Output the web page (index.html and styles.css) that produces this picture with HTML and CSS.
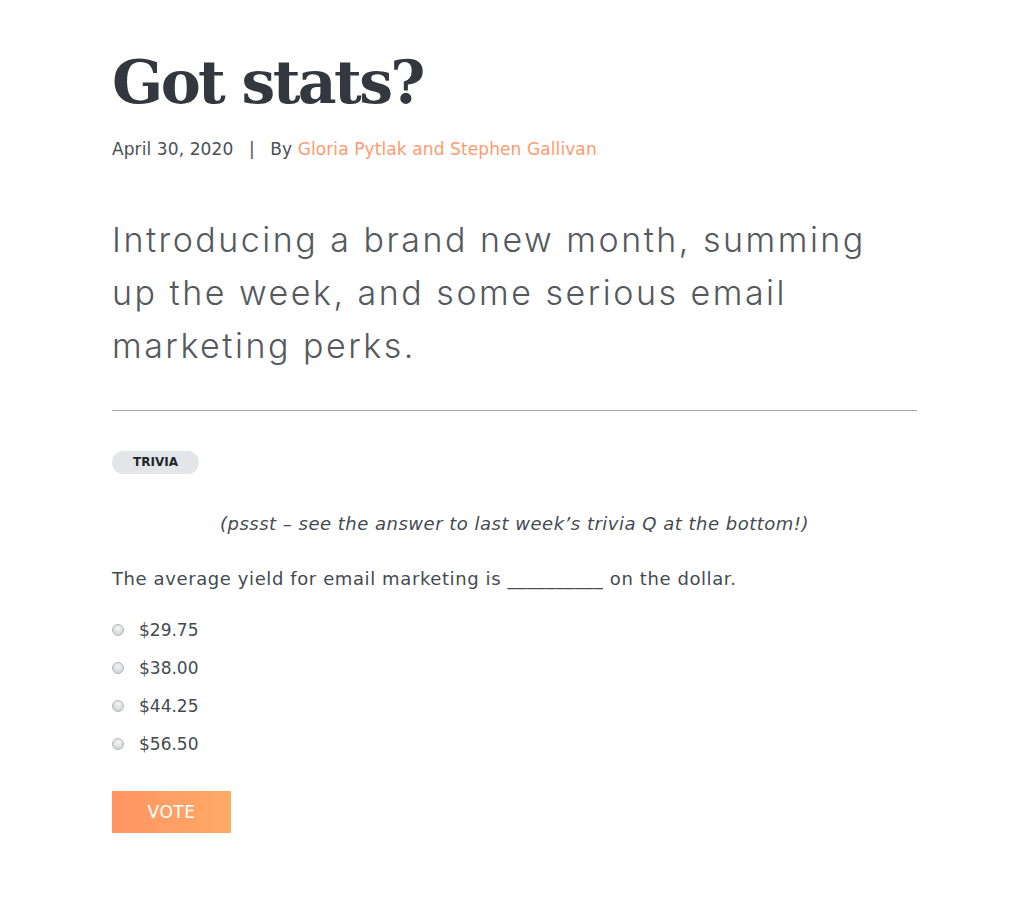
FILE: index.html
```
<!DOCTYPE html>
<html lang="en">
<head>
    <meta charset="UTF-8">
    <meta name="viewport" content="width=device-width, initial-scale=1.0">
    <title>Got stats?</title>
    <link rel="stylesheet" href="styles.css">
</head>
<body>
    <article class="post">
        <h1 class="title">Got stats?</h1>
        <p class="meta">April 30, 2020 <span class="sep">|</span> By <a href="#" class="author">Gloria Pytlak and Stephen Gallivan</a></p>
        <p class="intro">Introducing a brand new month, summing up the week, and some serious email marketing perks.</p>
        <hr class="rule">
        <span class="tag">TRIVIA</span>
        <p class="note">(pssst – see the answer to last week’s trivia Q at the bottom!)</p>
        <form class="poll">
            <p class="question">The average yield for email marketing is __________ on the dollar.</p>
            <label class="option"><input type="radio" name="yield" value="1"> $29.75</label>
            <label class="option"><input type="radio" name="yield" value="2"> $38.00</label>
            <label class="option"><input type="radio" name="yield" value="3"> $44.25</label>
            <label class="option"><input type="radio" name="yield" value="4"> $56.50</label>
            <button type="button" class="vote">VOTE</button>
        </form>
    </article>
</body>
</html>
```

FILE: styles.css
```
body {
    margin: 0;
    background-color: #fff;
    font-family: "DejaVu Sans", sans-serif;
    color: #454a50;
}
.post {
    width: 805px;
    margin-left: 112px;
    padding-top: 42px;
}
.title {
    font-family: "DejaVu Serif", serif;
    font-weight: bold;
    font-size: 60px;
    line-height: 80px;
    color: #33383e;
    margin: 0;
    letter-spacing: -2.6px;
}
.meta {
    font-size: 17px;
    letter-spacing: 0.1px;
    margin: 17px 0 0;
    color: #4a4f55;
}
.sep {
    margin: 0 10px;
    color: #4a4f55;
}
.author {
    color: #ff9a6e;
    text-decoration: none;
}
.intro {
    font-family: Inter, sans-serif;
    font-size: 34px;
    font-weight: 300;
    letter-spacing: 2.5px;
    line-height: 53px;
    color: #55595e;
    margin: 54px 0 0;
}
.rule {
    border: 0;
    border-top: 1px solid #a5a8ab;
    margin: 38px 0 0;
}
.tag {
    display: inline-block;
    margin-top: 40px;
    background-color: #e3e5e8;
    border-radius: 12px;
    padding: 0 21px;
    height: 23px;
    line-height: 23px;
    font-size: 12px;
    font-weight: bold;
    color: #22262a;
}
.note {
    font-style: italic;
    text-align: center;
    font-size: 18px;
    letter-spacing: 0.5px;
    margin: 39px 0 0;
}
.question {
    font-size: 18px;
    letter-spacing: 0.6px;
    margin: 34px 0 22px;
}
.option {
    display: flex;
    align-items: center;
    gap: 15px;
    font-size: 17px;
    height: 38px;
}
.option input {
    appearance: none;
    margin: 0;
    width: 12px;
    height: 12px;
    border: 1px solid #b4b6b9;
    border-radius: 50%;
    background: radial-gradient(circle at 50% 35%, #f4f4f5, #c9cbce);
}
.vote {
    margin-top: 28px;
    width: 119px;
    height: 42px;
    border: 0;
    background: linear-gradient(90deg, #ff9463, #ffaa66);
    color: #fff;
    font-family: inherit;
    font-size: 17px;
    letter-spacing: 0.5px;
}
```
